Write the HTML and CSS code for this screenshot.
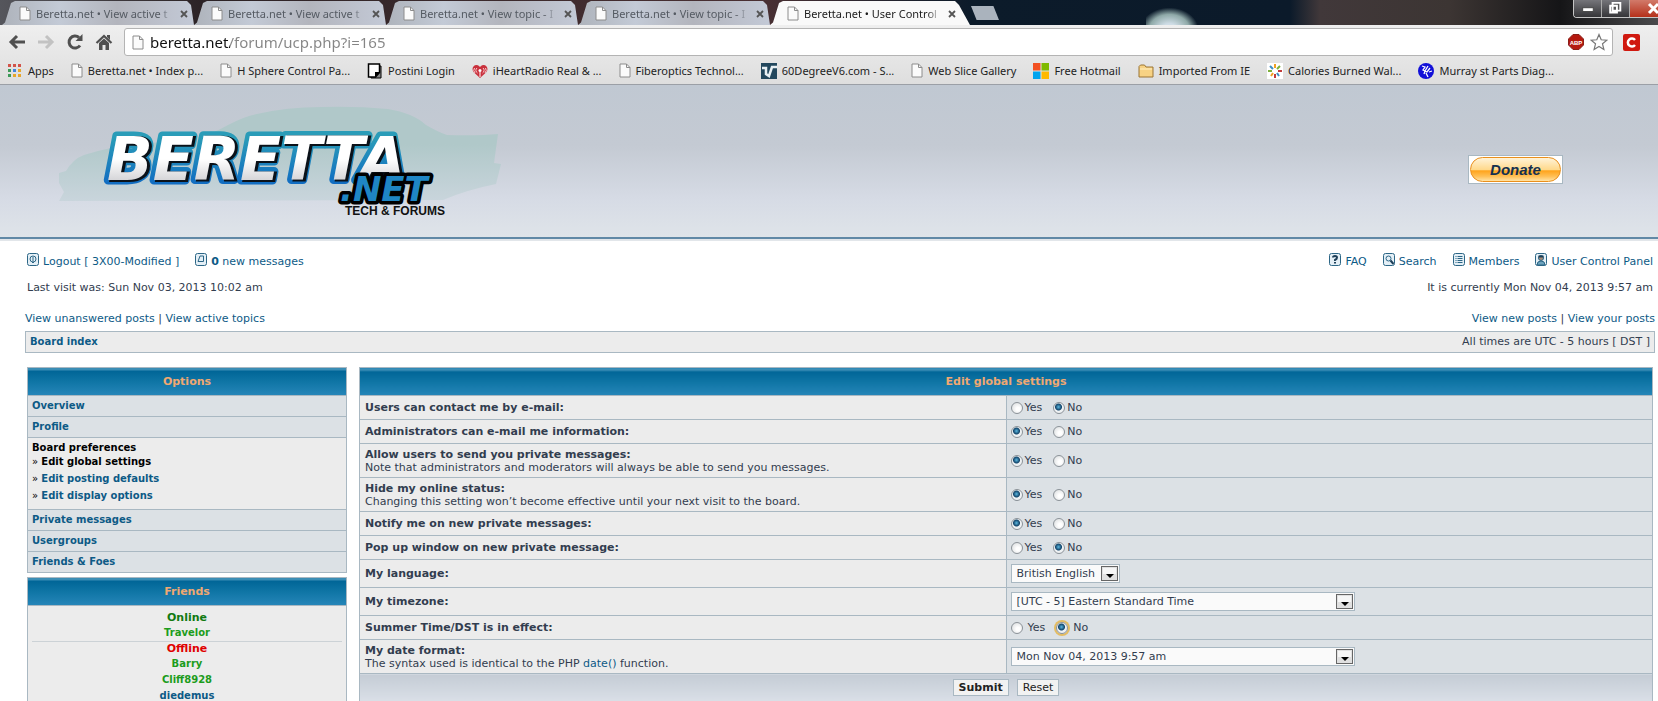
FILE: index.html
```html
<!DOCTYPE html>
<html lang="en">
<head>
<meta charset="utf-8">
<title>Beretta.net • User Control Panel</title>
<link rel="stylesheet" href="styles.css">
</head>
<body>
<svg class="defs" aria-hidden="true">
  <symbol id="doc" viewBox="0 0 12 15"><path d="M1 1h6.500l3.500 3.500v9.500h-10z" fill="#fbfbfb" stroke="#8c8c8c"/><path d="M7.500 1v3.500h3.500" fill="none" stroke="#8c8c8c"/></symbol>
  <symbol id="close" viewBox="0 0 8 8"><path d="M1 1l6 6M7 1l-6 6" stroke="#555" stroke-width="1.800"/></symbol>
  <symbol id="drop" viewBox="0 0 17 15"><rect x=".5" y=".5" width="16" height="14" fill="#e0e0e0" stroke="#666"/><path d="M2 2h13v6h-13z" fill="#f6f6f6"/><path d="M5 8h8l-4 4z" fill="#000"/></symbol>
</svg>

<header class="browser">
  <div class="tabstrip">
    <nav class="tabs" aria-label="Tabs">
      <div class="tab"><svg class="doc"><use href="#doc"/></svg><span class="tab-title">Beretta.net • View active t</span><button class="tab-close" aria-label="Close tab"><svg><use href="#close"/></svg></button></div>
      <div class="tab"><svg class="doc"><use href="#doc"/></svg><span class="tab-title">Beretta.net • View active t</span><button class="tab-close" aria-label="Close tab"><svg><use href="#close"/></svg></button></div>
      <div class="tab"><svg class="doc"><use href="#doc"/></svg><span class="tab-title">Beretta.net • View topic - I</span><button class="tab-close" aria-label="Close tab"><svg><use href="#close"/></svg></button></div>
      <div class="tab"><svg class="doc"><use href="#doc"/></svg><span class="tab-title">Beretta.net • View topic - I</span><button class="tab-close" aria-label="Close tab"><svg><use href="#close"/></svg></button></div>
      <div class="tab active"><svg class="doc"><use href="#doc"/></svg><span class="tab-title">Beretta.net • User Control</span><button class="tab-close" aria-label="Close tab"><svg><use href="#close"/></svg></button></div>
      <button class="new-tab" aria-label="New tab"></button>
    </nav>
    <div class="window-buttons">
      <button aria-label="Minimize"><svg viewBox="0 0 28 17"><rect x="9" y="8" width="11" height="4" fill="#fff" stroke="#444"/></svg></button>
      <button aria-label="Restore"><svg viewBox="0 0 28 17"><path d="M11 3h8v8h-8zM8.500 6h7v7h-7z" fill="#555" stroke="#fff" stroke-width="2"/></svg></button>
      <button class="win-close" aria-label="Close"><svg viewBox="0 0 28 17"><path d="M19 4l9 9M28 4l-9 9" stroke="#fff" stroke-width="3"/></svg></button>
    </div>
  </div>

  <div class="toolbar">
    <button class="tool" aria-label="Back"><svg viewBox="0 0 18 18"><path d="M17 9H3M9 3L3 9l6 6" fill="none" stroke="#505050" stroke-width="3"/></svg></button>
    <button class="tool" aria-label="Forward"><svg viewBox="0 0 18 18"><path d="M1 9h14M9 3l6 6-6 6" fill="none" stroke="#c2c2c2" stroke-width="3"/></svg></button>
    <button class="tool" aria-label="Reload"><svg viewBox="0 0 18 18"><path d="M14 12.500A6 6 0 1 1 13 4.500" fill="none" stroke="#505050" stroke-width="3"/><path d="M16.500 1v7h-7z" fill="#505050"/></svg></button>
    <button class="tool" aria-label="Home"><svg viewBox="0 0 18 18"><path d="M1.500 10L9 3l7.500 7" fill="none" stroke="#505050" stroke-width="2.200"/><path d="M12 2h3v5l-3-3zM4 10l5-4.500 5 4.500v7h-3.500v-5h-3v5H4z" fill="#505050"/></svg></button>
    <div class="omnibox">
      <svg class="doc"><use href="#doc"/></svg>
      <input class="url" type="text" aria-label="Address" value="beretta.net/forum/ucp.php?i=165">
      <svg class="abp" viewBox="0 0 16 16"><path d="M5 .5h6l4.500 4.500v6L11 15.500H5L.5 11V5z" fill="#b5190f" stroke="#8a2018"/><text x="8" y="11" text-anchor="middle" class="abp-text">ABP</text></svg>
      <svg class="star" viewBox="0 0 18 18"><path d="M9 1.500l2.200 5.300 5.700.4-4.400 3.600 1.400 5.700L9 13.500l-4.900 3 1.400-5.700L1.100 7.200l5.700-.4z" fill="#fff" stroke="#777" stroke-width="1.200"/></svg>
    </div>
    <button class="ext" aria-label="Extension"><svg viewBox="0 0 17 17"><rect width="17" height="17" rx="2" fill="#d0190f"/><path d="M12 6a4 4 0 1 0 0 5" fill="none" stroke="#fff" stroke-width="2.500"/></svg></button>
  </div>

  <nav class="bookmarks" aria-label="Bookmarks">
    <a href="#"><svg class="fav" viewBox="0 0 16 16"><path d="M1 1h3v3H1zM6 1h3v3H6zM11 1h3v3h-3z" fill="#d2544a"/><path d="M1 6h3v3H1zM1 11h3v3H1z" fill="#3d9a58"/><path d="M6 6h3v3H6z" fill="#4384dd"/><path d="M11 6h3v3h-3zM6 11h3v3H6zM11 11h3v3h-3z" fill="#e7a62c"/></svg>Apps</a>
    <a href="#"><svg class="doc"><use href="#doc"/></svg>Beretta.net • Index p...</a>
    <a href="#"><svg class="doc"><use href="#doc"/></svg>H Sphere Control Pa...</a>
    <a href="#"><svg class="fav" viewBox="0 0 16 16"><path d="M4 3h10v12H4z" fill="#888" stroke="#000"/><path d="M1.500 1h11v8.500L8.500 14h-7z" fill="#fff" stroke="#000" stroke-width="1.500"/><path d="M8 14v-5h5z" fill="#000"/></svg>Postini Login</a>
    <a href="#"><svg class="fav" viewBox="0 0 16 16"><path d="M8 15L2 9.500C-1 6 1 2 4.500 2 6.500 2 8 4 8 4s1.500-2 3.500-2C15 2 17 6 14 9.500z" fill="#c9303c"/><path d="M5.500 10a3 3 0 0 1-.5-5M10.500 10a3 3 0 0 0 .5-5M3 10a4 4 0 0 1-.5-5M13 10a4 4 0 0 0 .5-5" fill="none" stroke="#f7cdd0"/><circle cx="8" cy="7.500" r="1.500" fill="#fff"/><path d="M8 9v5" stroke="#fff"/></svg>iHeartRadio Real &amp; ...</a>
    <a href="#"><svg class="doc"><use href="#doc"/></svg>Fiberoptics Technol...</a>
    <a href="#"><svg class="fav" viewBox="0 0 16 16"><rect width="16" height="16" fill="#23485e"/><path d="M1 5h4v6l3 2 3-9h5" fill="none" stroke="#e8f0f4" stroke-width="2.500"/></svg>60DegreeV6.com - S...</a>
    <a href="#"><svg class="doc"><use href="#doc"/></svg>Web Slice Gallery</a>
    <a href="#"><svg class="fav" viewBox="0 0 16 16"><path d="M0 0h7.500v7.500H0z" fill="#f25022"/><path d="M8.500 0H16v7.500H8.500z" fill="#7fba00"/><path d="M0 8.500h7.500V16H0z" fill="#00a4ef"/><path d="M8.500 8.500H16V16H8.500z" fill="#ffb900"/></svg>Free Hotmail</a>
    <a href="#"><svg class="fav" viewBox="0 0 16 16"><path d="M1 14V3.500L2.500 2h4L8 4h7v10z" fill="#f7d283" stroke="#9a7434"/><path d="M2 6h12" stroke="#fff0c4"/></svg>Imported From IE</a>
    <a href="#"><svg class="fav" viewBox="0 0 16 16"><rect width="16" height="16" fill="#fff"/><g stroke-width="2"><path d="M8 1v4M4 13l2-3" stroke="#f0a020"/><path d="M3 3l3 3M12 13l-2-3" stroke="#3f8fc5"/><path d="M13 3l-3 3M1 8h4" stroke="#7eb03a"/><path d="M11 8h4M8 11v4" stroke="#c23b3b"/></g></svg>Calories Burned Wal...</a>
    <a href="#"><svg class="fav" viewBox="0 0 16 16"><circle cx="8" cy="8" r="8" fill="#1210d8"/><path d="M4 3l3 1-2 3 2 1-1 3M10 3L7 8l2 1 3-4M8 10l2 4M11 9l3-1" fill="none" stroke="#fff" stroke-width="1.300"/></svg>Murray st Parts Diag...</a>
  </nav>
</header>

<div class="site-header">
  <a class="logo" href="#" aria-label="Beretta.net Tech and Forums">
    <svg viewBox="0 0 450 120">
      <defs>
        <linearGradient id="edge" x1="0" y1="0" x2="0" y2="1"><stop offset=".2" stop-color="#2a9cb8"/><stop offset="1" stop-color="#0b62c4"/></linearGradient>
        <linearGradient id="face" x1="0" y1="0" x2="0" y2="1"><stop offset=".5" stop-color="#fff"/><stop offset=".9" stop-color="#c8c8cc"/></linearGradient>
        <linearGradient id="car" x1="0" y1="0" x2="0" y2="1"><stop offset=".4" stop-color="#b0c8c9"/><stop offset="1" stop-color="#c9d5dc"/></linearGradient>
      </defs>
      <path d="M2 101l5-9-5-9v-10l7-2q7-12 18-16 28-9 59-11 30-3 57-7 12-3 28-12 17-9 29-11 30-7 64-7 35-1 67 2 25 4 38 16 12 7 21 10 30 1 51-1l-4 29 7 1-5 20q-30 6-53 16z" fill="url(#car)"/>
      <g class="word-main">
        <text x="50" y="80" class="word-edge">BERETTA</text>
        <text x="52" y="81" class="word-shadow">BERETTA</text>
        <text x="50" y="80" class="word-face">BERETTA</text>
      </g>
      <g class="word-net">
        <text x="283" y="101" class="net-edge">.NET</text>
        <text x="283" y="101" class="net-face">.NET</text>
      </g>
      <text x="388" y="115" text-anchor="end" class="tagline">TECH &amp; FORUMS</text>
    </svg>
  </a>
  <button class="donate"><span>Donate</span></button>
</div>

<main class="page">
  <div class="menubar">
    <div class="links">
      <a href="#"><svg class="mi" viewBox="0 0 12 13"><rect x=".5" y=".5" width="11" height="12" rx="2"/><circle cx="6" cy="6" r="3"/><path d="M6 4v6M4.500 8.500L6 10l1.500-1.500"/></svg>Logout [ 3X00-Modified ]</a>
      <a href="#"><svg class="mi" viewBox="0 0 12 13"><rect x=".5" y=".5" width="11" height="12" rx="2"/><path d="M5 3h3.500v5.500h-5.500z"/></svg><strong>0</strong> new messages</a>
    </div>
    <div class="links">
      <a href="#"><svg class="mi" viewBox="0 0 12 13"><rect x=".5" y=".5" width="11" height="12" rx="2"/><path d="M4 4.500q0-1.500 2-1.500t2 1.500T6 7v1M6 9v1.500" class="thick"/></svg>FAQ</a>
      <a href="#"><svg class="mi" viewBox="0 0 12 13"><rect x=".5" y=".5" width="11" height="12" rx="2"/><circle cx="5.500" cy="5.500" r="2.500"/><path d="M7.500 7.500l3 3.500" class="thick"/></svg>Search</a>
      <a href="#"><svg class="mi" viewBox="0 0 12 13"><rect x=".5" y=".5" width="11" height="12" rx="2"/><path d="M2.500 3.500h1M4.500 3.500h5M2.500 5.500h1M4.500 5.500h5M2.500 7.500h1M4.500 7.500h5M2.500 9.500h1M4.500 9.500h5"/></svg>Members</a>
      <a href="#"><svg class="mi" viewBox="0 0 12 13"><rect x=".5" y=".5" width="11" height="12" rx="2"/><path d="M2 12q0-4 4-4t4 4z" fill="#6da3bd"/><circle cx="6" cy="5" r="2.500" fill="#a98d78"/><path d="M3.500 3.500h5" class="thick"/></svg>User Control Panel</a>
    </div>
  </div>
  <div class="dates"><span>Last visit was: Sun Nov 03, 2013 10:02 am</span><span>It is currently Mon Nov 04, 2013 9:57 am</span></div>

  <div class="quick"><span><a href="#">View unanswered posts</a> | <a href="#">View active topics</a></span><span><a href="#">View new posts</a> | <a href="#">View your posts</a></span></div>
  <div class="crumbs"><a href="#">Board index</a><span>All times are UTC - 5 hours [ DST ]</span></div>

  <div class="columns">
    <aside class="side">
      <section class="panel">
        <h2>Options</h2>
        <ul class="menu">
          <li><a href="#">Overview</a></li>
          <li><a href="#">Profile</a></li>
          <li class="open"><b>Board preferences</b>
            <ul>
              <li>» <b>Edit global settings</b></li>
              <li>» <a href="#">Edit posting defaults</a></li>
              <li>» <a href="#">Edit display options</a></li>
            </ul>
          </li>
          <li><a href="#">Private messages</a></li>
          <li><a href="#">Usergroups</a></li>
          <li><a href="#">Friends &amp; Foes</a></li>
        </ul>
      </section>
      <section class="panel">
        <h2>Friends</h2>
        <div class="friends">
          <h3 class="online">Online</h3>
          <ul><li><a class="green" href="#">Travelor</a></li></ul>
          <h3 class="offline">Offline</h3>
          <ul>
            <li><a class="green" href="#">Barry</a></li>
            <li><a class="green" href="#">Cliff8928</a></li>
            <li><a href="#">diedemus</a></li>
          </ul>
        </div>
      </section>
    </aside>

    <form class="main">
      <table class="settings">
        <thead><tr><th colspan="2">Edit global settings</th></tr></thead>
        <tbody>
          <tr><td><b>Users can contact me by e-mail:</b></td><td><label><input type="radio" name="mail">Yes</label><label><input type="radio" name="mail" checked>No</label></td></tr>
          <tr><td><b>Administrators can e-mail me information:</b></td><td><label><input type="radio" name="admin" checked>Yes</label><label><input type="radio" name="admin">No</label></td></tr>
          <tr class="tall"><td><b>Allow users to send you private messages:</b><small>Note that administrators and moderators will always be able to send you messages.</small></td><td><label><input type="radio" name="pm" checked>Yes</label><label><input type="radio" name="pm">No</label></td></tr>
          <tr class="tall"><td><b>Hide my online status:</b><small>Changing this setting won’t become effective until your next visit to the board.</small></td><td><label><input type="radio" name="hide" checked>Yes</label><label><input type="radio" name="hide">No</label></td></tr>
          <tr><td><b>Notify me on new private messages:</b></td><td><label><input type="radio" name="notify" checked>Yes</label><label><input type="radio" name="notify">No</label></td></tr>
          <tr><td><b>Pop up window on new private message:</b></td><td><label><input type="radio" name="popup">Yes</label><label><input type="radio" name="popup" checked>No</label></td></tr>
          <tr class="mid"><td><label for="lang"><b>My language:</b></label></td><td><span class="select"><select id="lang"><option>British English</option></select><svg><use href="#drop"/></svg></span></td></tr>
          <tr class="mid"><td><label for="tz"><b>My timezone:</b></label></td><td><span class="select wide"><select id="tz"><option>[UTC - 5] Eastern Standard Time</option></select><svg><use href="#drop"/></svg></span></td></tr>
          <tr class="spaced"><td><b>Summer Time/DST is in effect:</b></td><td><label><input type="radio" name="dst">Yes</label><label><input type="radio" name="dst" class="focused" checked>No</label></td></tr>
          <tr class="tall"><td><label for="df"><b>My date format:</b></label><small>The syntax used is identical to the PHP <a href="#">date()</a> function.</small></td><td><span class="select wide"><select id="df"><option>Mon Nov 04, 2013 9:57 am</option></select><svg><use href="#drop"/></svg></span></td></tr>
        </tbody>
        <tfoot><tr><td colspan="2"><button type="submit" class="btn primary">Submit</button><button type="reset" class="btn">Reset</button></td></tr></tfoot>
      </table>
    </form>
  </div>
</main>
</body>
</html>
```

FILE: styles.css
```css
* { box-sizing: border-box; }
html { overflow: hidden; }
body { margin: 0; background: #fff; color: #323d4f; font: 11px/14px "DejaVu Sans", Verdana, sans-serif; }
a { color: #0d5a86; text-decoration: none; }
button { margin: 0; padding: 0; border: 0; background: none; font: inherit; }
svg { display: block; flex: none; }
ul { list-style: none; margin: 0; padding: 0; }
.defs { position: absolute; width: 0; height: 0; }
.doc { width: 12px; height: 15px; }

/* Browser window */
.browser { font: 11px/16px "Noto Sans", "Open Sans", sans-serif; color: #222; border-bottom: 1px solid #9b9fa6; background: linear-gradient(#f6f6f6, #dedede); }
.tabstrip {
  display: flex; justify-content: space-between; height: 25px;
  background:
    radial-gradient(ellipse at 45% 100%, #cfdde6 20%, #8fa9a8 50%, transparent 72%) 1146px 8px / 52px 22px no-repeat,
    linear-gradient(90deg, #55565c 0, #2c2326 200px, #4a3033 760px, #0c1b2a 970px, #0b1a2a 1290px, #41383a 1320px, #3c3533 1450px, #151517 1560px, #4a4a4c 100%);
}
.tabs { display: flex; padding-left: 2px; }
.tab { display: flex; align-items: center; gap: 5px; width: 192px; height: 25px; padding: 2px 4px 0 17px; color: #555b63; background: linear-gradient(90deg, #aeb3bb, #c3cad6 30%, #b3b5bd 60%, #c3c9d6); clip-path: polygon(0 100%, 3px 90%, 9px 12%, 13px 4%, 185px 4%, 189px 20%, 100% 100%); }
.tab.active { width: 200px; padding-right: 12px; color: #1c1c1c; background: #f9f9f9; }
.tab-title { flex: 1; overflow: hidden; white-space: nowrap; mask-image: linear-gradient(90deg, #000 90%, transparent); }
.tab-close { padding: 2px; }
.tab-close svg { width: 8px; height: 8px; }
.new-tab { width: 28px; height: 14px; margin: 6px 0 0 1px; background: #aab3bd; clip-path: polygon(0 0, 80% 0, 100% 100%, 20% 100%); }
.window-buttons { display: flex; height: 18px; border: 1px solid #c5c5c5; border-width: 0 0 1px 1px; border-radius: 0 0 0 4px; overflow: hidden; }
.window-buttons button { width: 28px; height: 17px; background: linear-gradient(#75757a, #353538); border-right: 1px solid #aaa; }
.window-buttons .win-close { background: linear-gradient(#d27a6a, #b5301a); border-right: 0; }
.toolbar { display: flex; align-items: center; height: 34px; padding: 0 18px 0 8px; }
.tool { width: 18px; margin-right: 11px; }
.omnibox { display: flex; flex: 1; align-items: center; height: 28px; padding: 0 4px 0 7px; background: #fff; border: 1px solid #b4b4b4; border-radius: 3px; }
.url { flex: 1; min-width: 0; height: 26px; margin-left: 6px; padding: 0; border: 0; outline: 0; font: 15px/24px "Noto Sans", "Open Sans", sans-serif; color: transparent; background: linear-gradient(90deg, #111 80px, #858585 80px) text; -webkit-background-clip: text; }
.abp { width: 16px; height: 16px; margin-right: 6px; }
.abp-text { font: bold 6px "Liberation Sans", sans-serif; fill: #fff; }
.star { width: 18px; height: 18px; }
.ext { width: 17px; margin-left: 10px; }
.bookmarks { display: flex; align-items: center; gap: 17px; height: 25px; padding: 0 7px 2px; white-space: nowrap; overflow: hidden; }
.bookmarks a { display: flex; align-items: center; gap: 5px; color: #222; }
.fav { width: 16px; height: 16px; }

/* Forum banner */
.site-header { display: flex; justify-content: space-between; align-items: flex-start; height: 154px; padding: 15px 95px 0 57px; background: linear-gradient(#c0c8d2 0, #c4cad3 40%, #d6dbe5 75%, #dfe4e9 100%); border-bottom: 2px solid #6189a6; }
.logo svg { width: 450px; height: 120px; overflow: visible; }
.word-main { font: italic bold 60px "DejaVu Sans", sans-serif; }
.word-edge { fill: #1c80c0; stroke: url(#edge); stroke-width: 9px; stroke-linejoin: round; }
.word-shadow { fill: #0b1219; stroke: #0b1219; stroke-width: 2px; }
.word-face { fill: url(#face); }
.word-net { font: italic bold 34px "DejaVu Sans", sans-serif; }
.net-edge { fill: #000; stroke: #000; stroke-width: 7px; stroke-linejoin: round; }
.net-face { fill: #1f86c4; }
.tagline { font: bold 12px "Liberation Sans", sans-serif; fill: #111; }
.donate { width: 95px; height: 29px; margin-top: 55px; padding: 1px; background: #fff; border: 1px solid #a9b8c2; }
.donate span { display: block; height: 25px; border: 1px solid #e98f1d; border-radius: 13px; background: linear-gradient(#fff3d8, #ffd98c 50%, #ffa41c 56%, #ffc057 80%, #ffe3a6); color: #15304f; font: italic bold 15px/23px "Liberation Sans", sans-serif; }

/* Page frame */
.page { padding: 0 3px 0 25px; border-top: 2px solid #e2e6ea; }
.menubar, .dates, .quick, .crumbs { display: flex; justify-content: space-between; }
.menubar, .dates { padding: 0 2px; }
.menubar { padding-top: 12px; }
.links { display: flex; gap: 16px; }
.links a { display: flex; align-items: flex-end; white-space: pre; }
.mi { width: 12px; height: 13px; margin: 0 4px 3px 0; fill: #e4eff6; stroke: #2c6686; }
.mi .thick { stroke-width: 2px; fill: none; stroke: #1d3f58; }
.dates { margin-top: 12px; }
.quick { margin-top: 17px; }
.crumbs { margin-top: 5px; padding: 3px 4px; border: 1px solid #a9b8c2; background: #ececec; }
.crumbs a { font-weight: bold; font-size: 10px; }
.columns { display: flex; align-items: flex-start; gap: 12px; margin: 14px 2px 0; }
.side { flex: none; width: 320px; }
.main { flex: 1; min-width: 0; }

/* Panels */
.panel { margin-bottom: 4px; border: 1px solid #a9b8c2; }
.panel h2, .settings th { height: 28px; margin: 0; padding: 0; border-bottom: 1px solid #a9b8c2; background: linear-gradient(#3a8db5 0, #3a8db5 2px, #006597 3px, #0f75a5 50%, #2585b8 100%); color: #f0a871; font-size: 11px; line-height: 27px; font-weight: bold; text-align: center; }
.menu { font-size: 10px; color: #000; }
.menu > li { padding: 3px 4px; border-bottom: 1px solid #a9b8c2; background: #dce1e5; }
.menu > li:last-child { border-bottom: 0; }
.menu a, .friends a { font-weight: bold; }
.menu > li.open { background: #ececec; padding-bottom: 6px; }
.open ul { display: grid; gap: 3px; }
.friends { padding: 5px 4px; background: #ececec; text-align: center; font-size: 10px; line-height: 15px; }
.friends h3 { margin: 0; font-size: 11px; line-height: 14px; }
.friends ul { display: grid; gap: 1px; }
.online { color: #117a11; }
.offline { color: #e00000; }
.friends .offline { margin-top: 1px; border-top: 1px solid #ccd2d6; }
.friends .green { color: #1c9c1c; }

/* Settings table */
.settings { width: 100%; border-collapse: collapse; table-layout: fixed; border: 1px solid #a9b8c2; }
.settings td { height: 24px; padding: 0 5px; border: 1px solid #a9b8c2; background: #ececec; }
.settings td + td { background: #dce1e5; padding: 0 4px; }
.settings .tall td { height: 34px; }
.settings .mid td { height: 28px; }
.settings small { display: block; font-size: 11px; line-height: 12px; }
.settings td + td label { display: inline-flex; align-items: center; gap: 2px; margin-right: 11px; vertical-align: middle; }
.settings .spaced td + td label { gap: 5px; }
input[type="radio"] { appearance: none; width: 12px; height: 12px; margin: 0; border: 1px solid #8b9298; border-radius: 50%; background: radial-gradient(circle at 60% 60%, #fff 20%, #d5d8da); }
input[type="radio"]:checked { background: radial-gradient(circle at 45% 40%, #5bb8e0 0, #12456b 3px, #eef1f3 4px); }
.focused { box-shadow: 0 0 0 2px #e3bc63; }
.select { display: inline-block; position: relative; vertical-align: middle; }
.select select { appearance: none; display: block; height: 19px; width: 100%; padding: 0 23px 0 5px; border: 1px solid #a9b8c2; border-radius: 0; background: #fafafa; color: #323d4f; font: 11px/15px "DejaVu Sans", Verdana, sans-serif; }
.select svg { position: absolute; right: 2px; top: 2px; width: 17px; height: 15px; pointer-events: none; }
.select.wide { width: 344px; }
.settings tfoot td { height: 29px; background: linear-gradient(#c4ccd5, #dadfe7); text-align: center; border-bottom: 3px solid #c4ccd5; }
.btn { height: 17px; padding: 0 5px; border: 1px solid #a9b8c2; background: #f2f2f2; color: #222; line-height: 14px; vertical-align: middle; }
.btn.primary { margin-right: 8px; font-weight: bold; }
```
